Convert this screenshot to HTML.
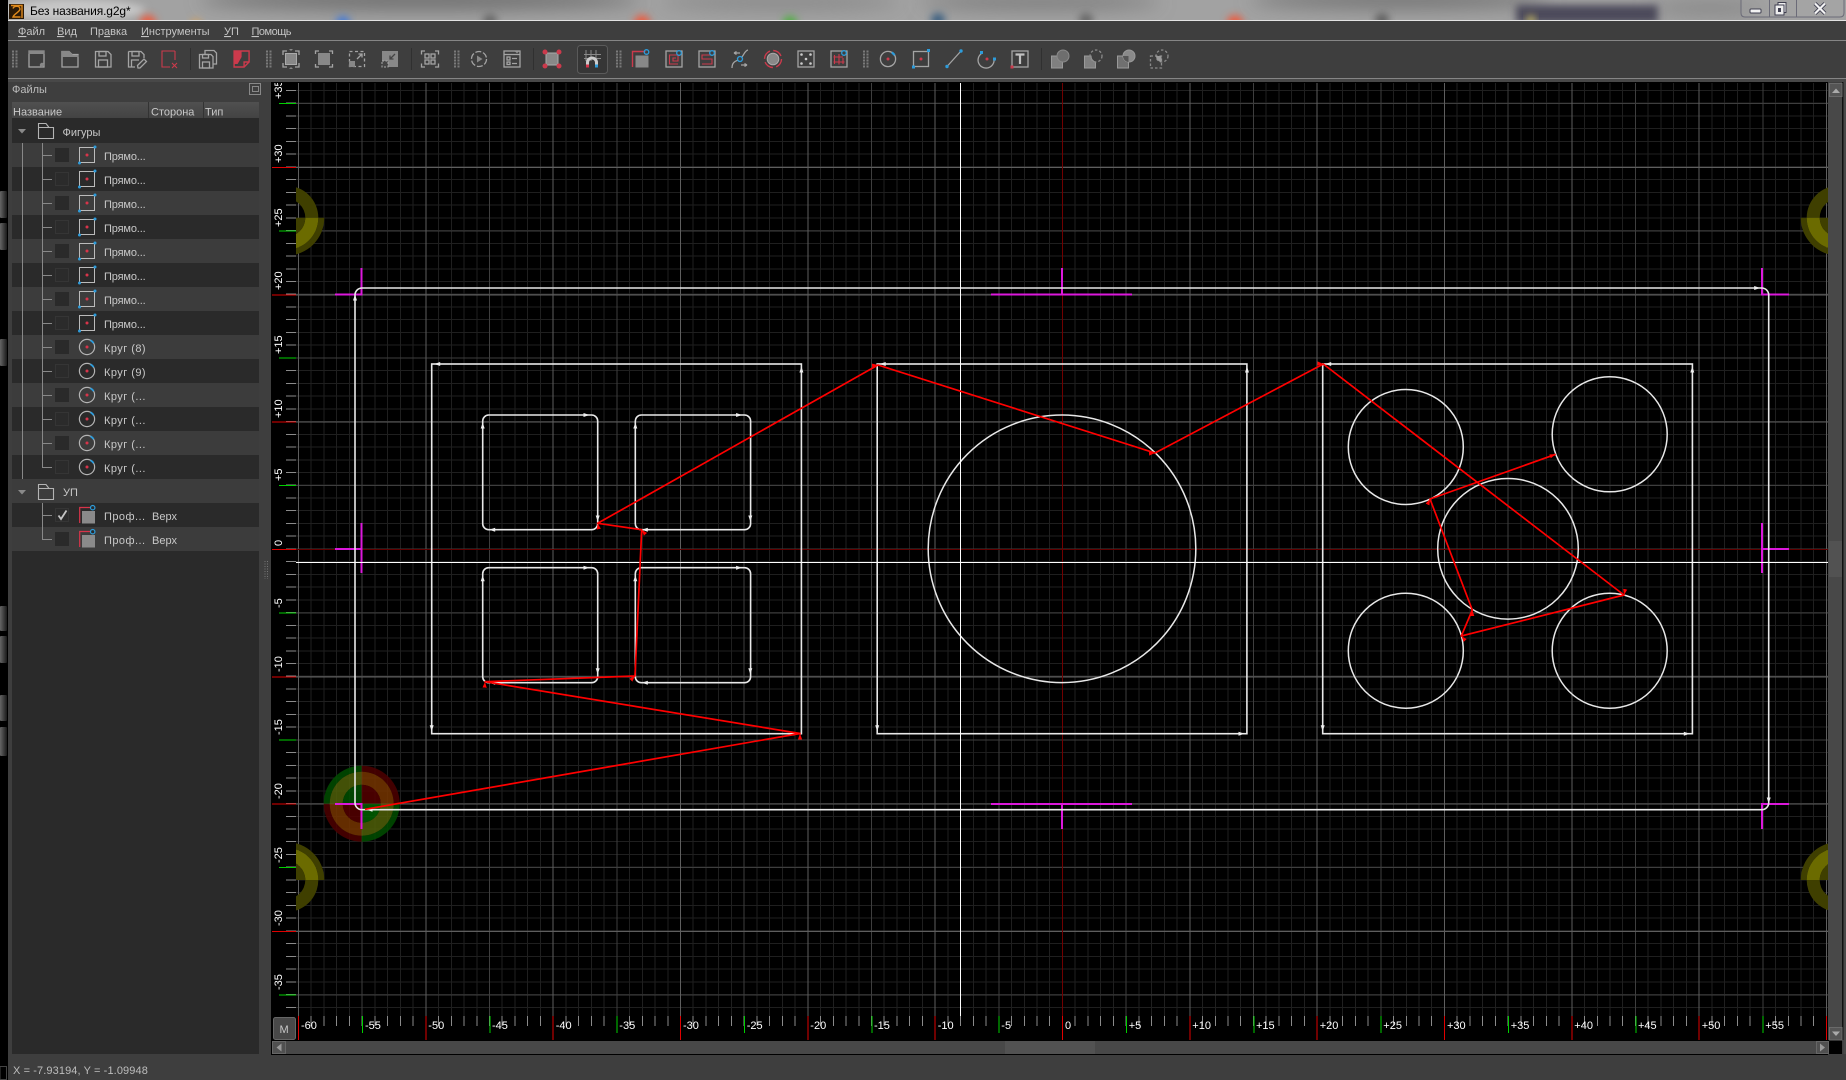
<!DOCTYPE html>
<html><head><meta charset="utf-8"><title>Без названия.g2g*</title>
<style>
html,body{margin:0;padding:0;background:#3e3e3e;overflow:hidden}
svg{display:block}
text{font-family:"Liberation Sans","Noto Sans CJK SC",sans-serif;font-size:11px}
.s{fill:none;stroke:#a4a4a4;stroke-width:1.3}
.d{fill:none;stroke:#8a8a8a;stroke-width:1.3}
.r{fill:none;stroke:#cc3a4c;stroke-width:1.4}
.f{fill:#888}
.rf{fill:#cc3a4c}
.b{fill:#2d9cdb}
.bs{fill:none;stroke:#2d9cdb;stroke-width:1.3}
.t{fill:#c8c8c8}
.k{fill:#c8c8c8;letter-spacing:.45px}
.m{fill:#c4c4c4}
.w{fill:none;stroke:#e8e8e8;stroke-width:1.6}
.g{shape-rendering:crispEdges;fill:none}
.mg{stroke:#dc18dc;stroke-width:1.6;fill:none;shape-rendering:crispEdges}
.l{fill:#fff}
.tree{stroke:#888;stroke-width:1;fill:none;shape-rendering:crispEdges}
</style></head><body>
<svg width="1846" height="1080" viewBox="0 0 1846 1080" xmlns="http://www.w3.org/2000/svg">
<defs>
<filter id="bl" x="-50%" y="-200%" width="200%" height="500%"><feGaussianBlur stdDeviation="9"/></filter>
<filter id="bl2" x="-50%" y="-200%" width="200%" height="500%"><feGaussianBlur stdDeviation="4"/></filter>
<clipPath id="tc"><rect x="8" y="0" width="1838" height="20"/></clipPath>
<clipPath id="cv"><rect x="296" y="83" width="1532" height="933"/></clipPath>
<clipPath id="yc"><rect x="272" y="83" width="24" height="933"/></clipPath>
<linearGradient id="hd" x1="0" y1="0" x2="0" y2="1"><stop offset="0" stop-color="#505050"/><stop offset="1" stop-color="#434343"/></linearGradient>
<linearGradient id="sb" x1="0" y1="0" x2="1" y2="0"><stop offset="0" stop-color="#666"/><stop offset="1" stop-color="#1a1a1a"/></linearGradient>
<marker id="ra" markerUnits="userSpaceOnUse" markerWidth="7" markerHeight="5" refX="6" refY="2.500" orient="auto"><path d="M0 .4L6 2.500L0 4.600z" fill="#f00"/></marker>
<path id="au" d="M0 -3.500L2 2.500H-2Z" fill="#eee"/>
<path id="qo" d="M-38 0A38 38 0 0 1 0 -38V-32A32 32 0 0 0 -32 0Z"/>
<path id="qm" d="M-32 0A32 32 0 0 1 0 -32V-19A19 19 0 0 0 -19 0Z"/>
<path id="qi" d="M-19 0A19 19 0 0 1 0 -19V0Z"/>
<g id="ye">
 <use href="#qm" transform="scale(-1,1)" fill="#3f3f00"/>
 <use href="#qm" fill="#3f3f00"/>
 <use href="#qo" transform="scale(-1,-1)" fill="#3f3f00"/>
 <use href="#qm" transform="scale(-1,-1)" fill="#6b6b00"/>
 <use href="#qi" transform="scale(-1,-1)" fill="#3f3f00"/>
 <use href="#qo" transform="scale(1,-1)" fill="#3f3f00"/>
 <use href="#qm" transform="scale(1,-1)" fill="#6b6b00"/>
 <use href="#qi" transform="scale(1,-1)" fill="#3f3f00"/>
</g>
<g id="irect"><rect x="79.500" y="-7.500" width="15" height="15" fill="none" stroke="#bbb"/><circle cx="87" cy="0" r="1.500" fill="#d8344a"/><circle cx="95" cy="-8" r="1.500" class="b"/><circle cx="79.500" cy="8" r="1.500" class="b"/></g>
<g id="icirc"><circle cx="87" cy="0" r="7.600" fill="none" stroke="#b4b4b4" stroke-width="1.200"/><circle cx="87" cy="0" r="1.500" fill="#d8344a"/><path d="M90.500 -6.700A7.600 7.600 0 0 1 93.600 -3.800" fill="none" stroke="#2d9cdb" stroke-width="1.800"/></g>
<g id="iprof"><path d="M79.700 8V-7.500H91" fill="none" stroke="#d8344a" stroke-width="1.200"/><rect x="82" y="-4" width="13" height="12.500" fill="#8a8a8a"/><circle cx="92.700" cy="-7.300" r="2.200" fill="#2a2a2a" stroke="#2d9cdb" stroke-width="1.200"/></g>
<path id="ifold" d="M38.500 20.500V5.500H46L49 9.500H53.500V20.500ZM38.500 9.500H49" fill="none" stroke="#b4b4b4" stroke-width="1.100"/>
<g id="cl"><rect x="55" y="-7" width="14" height="14" fill="#2a2a2a"/></g>
<g id="cd"><rect x="55.500" y="-6.500" width="13" height="13" fill="#2b2b2b" stroke="#353535"/></g>
<g id="grip"><path d="M-2 -8.500V9M1.500 -8.500V9" stroke="#7a7a7a" stroke-width="2" stroke-dasharray="2 1" fill="none"/></g>
</defs>

<!-- base -->
<rect width="1846" height="1080" fill="#3e3e3e"/>

<!-- blurred title bar -->
<g clip-path="url(#tc)">
 <rect x="8" y="0" width="1838" height="20" fill="#a2a2a2"/>
 <ellipse cx="420" cy="0" rx="220" ry="9" fill="#6a6a6a" filter="url(#bl)"/>
 <ellipse cx="780" cy="2" rx="120" ry="7" fill="#858585" filter="url(#bl)"/>
 <ellipse cx="1040" cy="2" rx="120" ry="7" fill="#787878" filter="url(#bl)"/>
 <ellipse cx="1400" cy="0" rx="150" ry="8" fill="#707070" filter="url(#bl)"/>
 <ellipse cx="1710" cy="8" rx="60" ry="8" fill="#888" filter="url(#bl)"/>
 <ellipse cx="70" cy="10" rx="75" ry="11" fill="#c6c6c6" filter="url(#bl2)"/>
 <circle cx="148" cy="23" r="8" fill="#ee5a3c" filter="url(#bl2)"/>
 <circle cx="196" cy="24" r="5" fill="#d9a25a" filter="url(#bl2)"/>
 <circle cx="343" cy="23" r="7" fill="#3f78d8" filter="url(#bl2)"/>
 <circle cx="490" cy="21" r="7" fill="#666" filter="url(#bl2)"/>
 <circle cx="642" cy="23" r="8" fill="#ee5a3c" filter="url(#bl2)"/>
 <circle cx="790" cy="23" r="7" fill="#4caf3c" filter="url(#bl2)"/>
 <circle cx="938" cy="20" r="7" fill="#3b5f80" filter="url(#bl2)"/>
 <circle cx="1086" cy="20" r="7" fill="#666" filter="url(#bl2)"/>
 <circle cx="1235" cy="23" r="8" fill="#ee5a3c" filter="url(#bl2)"/>
 <circle cx="1382" cy="20" r="7" fill="#5f5f5f" filter="url(#bl2)"/>
 <rect x="1516" y="5" width="142" height="18" fill="#4b4a5a" filter="url(#bl2)"/>
 <circle cx="1531" cy="20" r="4" fill="#e0d060" filter="url(#bl2)"/>
</g>
<rect x="0" y="0" width="8" height="1080" fill="#000"/>
<rect x="8" y="20" width="1838" height="1" fill="#e2e2e2"/>

<!-- app icon + title -->
<rect x="9" y="4" width="15" height="15" fill="#2a1a08"/>
<path d="M13 8.500C14 5.500 20 5.500 20 9C20 12 14 13.500 13 17H20.500M11 5.500H22V18" fill="none" stroke="#e08a1c" stroke-width="1.400"/>
<text x="30" y="15" fill="#000" style="font-size:12px;letter-spacing:-.12px">Без названия.g2g*</text>

<!-- window buttons -->
<path d="M1741 0V13Q1741 17 1745 17H1840Q1844 17 1844 13V0" fill="#a8a8a8" fill-opacity=".35" stroke="#6b6b78"/>
<path d="M1769.500 0V17M1796.500 0V17" stroke="#6b6b78"/>
<rect x="1750" y="9" width="11" height="4" rx="1" fill="#f2f2f2" stroke="#3f3f50"/>
<rect x="1778" y="2.500" width="8" height="10" fill="#eee" stroke="#3f3f50"/>
<rect x="1775" y="5" width="9" height="10" fill="#eee" stroke="#3f3f50"/>
<rect x="1778" y="8" width="3" height="4" fill="#3f3f50"/>
<path d="M1815 3.500L1825 13.500M1825 3.500L1815 13.500" stroke="#3f3f50" stroke-width="4"/>
<path d="M1815 3.500L1825 13.500M1825 3.500L1815 13.500" stroke="#f4f4f4" stroke-width="2.200"/>

<!-- menu -->
<g class="m">
<text x="18" y="35" class="m"><tspan text-decoration="underline">Ф</tspan>айл</text>
<text x="57" y="35" class="m"><tspan text-decoration="underline">В</tspan>ид</text>
<text x="90" y="35" class="m">Пр<tspan text-decoration="underline">а</tspan>вка</text>
<text x="141" y="35" class="m"><tspan text-decoration="underline">И</tspan>нструменты</text>
<text x="224" y="35" class="m"><tspan text-decoration="underline">У</tspan>П</text>
<text x="251.500" y="35" class="m" style="letter-spacing:-.5px"><tspan text-decoration="underline">П</tspan>омощь</text>
</g>
<rect x="8" y="40" width="1838" height="1" fill="#858585"/>
<rect x="8" y="78" width="1838" height="1" fill="#858585"/>
<rect x="8" y="79" width="1838" height="3" fill="#484848"/>

<!-- toolbar grips and separators -->
<use href="#grip" transform="translate(15,59)"/>
<use href="#grip" transform="translate(269,59)"/>
<use href="#grip" transform="translate(457,59)"/>
<use href="#grip" transform="translate(619,59)"/>
<use href="#grip" transform="translate(866,59)"/>
<path d="M190.500 48V70M411.500 48V70M533.500 48V70M1041.500 48V70" stroke="#303030"/>

<!-- toolbar icons -->
<g transform="translate(37,59)"><rect class="s" x="-8" y="-8" width="15" height="16"/><rect class="f" x="-8.500" y="-8.500" width="16" height="3.500"/><circle class="f" cx="5" cy="6" r="2.200"/></g>
<g transform="translate(70,59)"><path class="s" d="M-8 -7.500H-1L2 -4.500H8V8H-8Z"/><path class="f" d="M-8 -8H-1L3 -4H8.500V-2H-8Z"/></g>
<g transform="translate(103,59)"><path class="s" d="M-7.500 -7.500H5L8 -4.500V8H-7.500Z"/><rect class="s" x="-4" y="-7.500" width="7" height="4.500"/><rect class="s" x="-4.500" y="1" width="9" height="7"/></g>
<g transform="translate(136,59)"><path class="s" d="M-7.500 -7.500H5L8 -4.500V-1M-1 8H-7.500V-7.500"/><rect class="s" x="-4" y="-7.500" width="7" height="4.500"/><path class="s" d="M-4.500 8V1H3"/><path class="s" d="M2 9L1.500 6.500L8 0L10.500 2.500L4 9Z"/></g>
<g transform="translate(169,59)"><path class="r" d="M6 -8H-7V8H1M6 -8V1" stroke-width="1.100" style="stroke-width:1.100"/><path class="r" d="M3 4L8 9M8 4L3 9" style="stroke-width:1.100"/></g>
<g transform="translate(208,59)"><path class="s" d="M-8.500 -4.500H3L5 -2.500V9H-8.500Z"/><rect class="s" x="-5.500" y="-4.500" width="6" height="3.500"/><rect class="s" x="-5.500" y="3" width="7" height="6"/><path class="s" d="M-3 -4.500V-8.500H6L8.500 -6V5H5"/></g>
<g transform="translate(241.600,59)"><path class="r" d="M-7.500 -8H7.500V3L2.500 8H-7.500Z"/><path class="r" d="M2.500 8V3H7.500"/><path class="rf" d="M-7.500 -8H0V-2L-4 5H-7.500Z"/></g>

<g transform="translate(291,59)"><rect class="f" x="-5.500" y="-5.500" width="11" height="11" stroke="#aaa"/><path class="s" d="M-8 -4V-8H-4M4 -8H8V-4M8 4V8H4M-4 8H-8V4"/><path class="f" d="M-2 -10H2L0 -8ZM-2 10H2L0 8Z"/></g>
<g transform="translate(324,59)"><rect class="f" x="-6" y="-6" width="12" height="12"/><path class="s" d="M-8.500 -5V-8H-5M5 -8H8.500V-5M8.500 5V8H5M-5 8H-8.500V5"/></g>
<g transform="translate(357,59)"><rect class="s" x="-7.500" y="-7.500" width="15" height="15" stroke-dasharray="3 2.500"/><rect class="f" x="-8" y="2" width="6" height="6"/><path class="s" d="M0 0L5 -5M1.500 -5H5V-1.500"/></g>
<g transform="translate(390,59)"><rect class="f" x="-8" y="-8" width="16" height="16"/><rect x="-8" y="2" width="6" height="6" fill="#444" stroke="#aaa" stroke-dasharray="2 1.500"/><path d="M5 -5L0 0M0 -3.500V0H3.500" fill="none" stroke="#444" stroke-width="1.300"/></g>
<g transform="translate(430,59)"><rect class="s" x="-5" y="-5" width="4" height="4"/><rect class="s" x="1" y="-5" width="4" height="4"/><rect class="s" x="-5" y="1" width="4" height="4"/><rect class="s" x="1" y="1" width="4" height="4"/><path class="s" d="M-8.500 -4.500V-8H-5M5 -8H8.500V-4.500M8.500 4.500V8H5M-5 8H-8.500V4.500"/></g>
<g transform="translate(479,59)"><circle class="s" cx="0" cy="0" r="7.500" stroke-dasharray="6 1.850"/><path class="f" d="M-2 -3.500L3.500 0L-2 3.500Z"/></g>
<g transform="translate(512,59)"><rect class="s" x="-8" y="-8" width="16" height="16"/><path class="s" d="M-8 -4.500H8"/><path class="f" d="M3 -7.500H7L5 -5.500Z"/><rect class="s" x="-5" y="-2" width="3" height="3"/><rect class="s" x="-5" y="3" width="3" height="2.500"/><path class="s" d="M0 -.5H5M0 4.500H5"/></g>
<g transform="translate(552,59)"><rect class="f" x="-6" y="-6" width="12" height="12" stroke="#aaa"/><circle class="rf" cx="-7" cy="-7" r="2.500"/><circle class="rf" cx="7" cy="-7" r="2.500"/><circle class="rf" cx="-7" cy="7" r="2.500"/><circle class="rf" cx="7" cy="7" r="2.500"/></g>

<rect x="577.500" y="45.500" width="30" height="28" rx="3" fill="#363636" stroke="#5a5a5a"/>
<g transform="translate(592,59)"><path d="M-8 -4.500H9M-8 -.5H9M-6 -9V2M-1 -9V2M4 -9V2" stroke="#8a8a8a" fill="none"/><path d="M-6 8V3.500A5.500 5.500 0 0 1 6 3.500V8H3V3.500A2.500 2.500 0 0 0 -3 3.500V8Z" fill="#ccc"/><rect x="-6" y="5.500" width="3" height="3" fill="#d8344a"/><rect x="3" y="5.500" width="3" height="3" fill="#2d9cdb"/></g>

<g transform="translate(640.500,59)"><path class="r" d="M-8 8V-7.500H5"/><rect class="f" x="-5" y="-3.500" width="13" height="12"/><circle class="bs" cx="6" cy="-7" r="2.300"/></g>
<g transform="translate(674,59)"><rect class="s" x="-8" y="-8" width="16" height="16"/><path class="r" style="stroke-width:1.100" d="M2 -1H-1V2H4V-4H-4.500V5H4"/><circle class="bs" cx="5" cy="-6" r="2.300" style="fill:#3e3e3e"/></g>
<g transform="translate(707,59)"><rect class="s" x="-8" y="-8" width="16" height="16"/><path class="r" style="stroke-width:1.100" d="M4 -4H-5V0H5V5H-5"/><circle class="bs" cx="5" cy="-6" r="2.300" style="fill:#3e3e3e"/></g>
<g transform="translate(740,59)"><path class="s" d="M-8 9C-8 2 -3 2 0 0C4 -3 4 -8 8 -9"/><path class="s" d="M-6 -6H0M-6 -6L-3.500 -7.500M-6 -6L-3.500 -4.500M1 6H7M7 6L4.500 4.500M7 6L4.500 7.500"/><circle class="bs" cx="0" cy="0" r="2.500" style="fill:#3e3e3e"/></g>
<g transform="translate(773,59)"><circle class="f" cx="0" cy="0" r="5.800" stroke="#aaa"/><circle class="r" cx="0" cy="0" r="8.500" stroke-dasharray="10 3.350"/></g>
<g transform="translate(806,59)"><rect class="s" x="-8" y="-8" width="16" height="16"/><circle cx="-4.500" cy="-4.500" r="1.300" fill="#ccc"/><circle cx="4.500" cy="-4.500" r="1.300" fill="#ccc"/><circle cx="-4.500" cy="4.500" r="1.300" fill="#ccc"/><circle cx="4.500" cy="4.500" r="1.300" fill="#ccc"/><circle cx="0" cy="0" r="1.300" fill="#ccc"/></g>
<g transform="translate(839,59)"><rect class="s" x="-8" y="-8" width="16" height="16"/><path class="r" style="stroke-width:1.100" d="M-4.500 -4V5M0 -5V5.500M4 -1V5M-5.500 -2H4M-5.500 3H5.500"/><circle class="bs" cx="5" cy="-6" r="2.300" style="fill:#3e3e3e"/></g>
<g transform="translate(888,59)"><circle class="s" cx="0" cy="0" r="7.600"/><circle class="rf" cx="0" cy="0" r="1.500"/><path d="M3.800 -6.500A7.600 7.600 0 0 1 6.500 -3.800" stroke="#2d9cdb" stroke-width="2.200" fill="none"/></g>
<g transform="translate(921,59)"><rect class="s" x="-7.500" y="-7.500" width="15" height="15"/><circle class="rf" cx="0" cy="0" r="1.500"/><rect class="b" x="6" y="-10" width="3" height="3"/><rect class="b" x="-9" y="6.500" width="3" height="3"/></g>
<g transform="translate(954,59)"><path class="s" d="M-7 7.500L7 -8"/><circle class="b" cx="-7" cy="7.500" r="1.700"/><circle class="b" cx="7" cy="-8" r="1.700"/></g>
<g transform="translate(987,59)"><path class="s" d="M-5.500 -5.500A8 8 0 1 0 7 0"/><circle class="rf" cx="0" cy="0" r="1.500"/><rect class="b" x="-7" y="-8" width="3" height="3"/><rect class="b" x="6" y="-1.500" width="3" height="3"/></g>
<g transform="translate(1020,59)"><rect class="s" x="-8" y="-8" width="16" height="16"/><path d="M-4.500 -4.500H4.500M0 -4.500V5" stroke="#c0c0c0" stroke-width="2.200" fill="none"/><rect class="rf" x="-9.500" y="6.500" width="3" height="3"/></g>

<g transform="translate(1060,59)"><rect x="-8.500" y="-3" width="11" height="12" fill="#808080" stroke="#9a9a9a"/><circle cx="3" cy="-3" r="6" fill="#6e6e6e" stroke="#8a8a8a"/></g>
<g transform="translate(1093,59)"><path d="M-8.500 -3H-2A6 6 0 0 0 2.500 3V9H-8.500Z" fill="#808080" stroke="#9a9a9a"/><circle class="d" cx="3" cy="-3" r="6" stroke-dasharray="2.500 2"/></g>
<g transform="translate(1126,59)"><rect x="-8.500" y="-3" width="11" height="12" fill="#707070" stroke="#9a9a9a"/><circle cx="3" cy="-3" r="6" fill="#8a8a8a" stroke="#9a9a9a"/><path d="M-3 -3H2.500V3A6 6 0 0 1 -3 -3Z" fill="#555"/></g>
<g transform="translate(1159,59)"><rect class="d" x="-8.500" y="-3" width="11" height="12" stroke-dasharray="2.500 2"/><circle class="d" cx="3" cy="-3" r="6" stroke-dasharray="2.500 2"/><path d="M-3 -3H2.500V3A6 6 0 0 1 -3 -3Z" fill="#9a9a9a"/></g>

<!-- left strip buttons -->
<g fill="url(#sb)">
<rect x="0" y="191" width="7" height="27" rx="1"/>
<rect x="0" y="223" width="7" height="27" rx="1"/>
<rect x="0" y="339" width="7" height="27" rx="1"/>
<rect x="0" y="606" width="7" height="25" rx="1"/>
<rect x="0" y="636" width="7" height="27" rx="1"/>
<rect x="0" y="695" width="7" height="26" rx="1"/>
<rect x="0" y="727" width="7" height="29" rx="1"/>
</g>

<!-- side panel -->
<text x="12" y="93" fill="#bcbcbc">Файлы</text>
<g fill="none" stroke="#888"><rect x="249.500" y="83.500" width="11" height="11"/><rect x="252.500" y="86.500" width="6" height="5"/></g>
<rect x="12" y="102" width="247" height="952" fill="#2a2a2a"/>
<rect x="12" y="102" width="247" height="16" fill="url(#hd)"/>
<path d="M148.500 102V118M203.500 102V118" stroke="#333" shape-rendering="crispEdges"/>
<text x="13" y="115.500" class="t">Название</text>
<text x="151" y="115.500" class="t">Сторона</text>
<text x="205" y="115.500" class="t">Тип</text>

<g fill="#3c3c3c">
<rect x="12" y="143" width="247" height="24"/><rect x="12" y="191" width="247" height="24"/><rect x="12" y="239" width="247" height="24"/><rect x="12" y="287" width="247" height="24"/><rect x="12" y="335" width="247" height="24"/><rect x="12" y="383" width="247" height="24"/><rect x="12" y="431" width="247" height="24"/><rect x="12" y="479" width="247" height="24"/><rect x="12" y="527" width="247" height="24"/>
</g>

<path class="tree" d="M22.500 143V479M42.500 143V467.500H52M42.500 155.500H52M42.500 179.500H52M42.500 203.500H52M42.500 227.500H52M42.500 251.500H52M42.500 275.500H52M42.500 299.500H52M42.500 323.500H52M42.500 347.500H52M42.500 371.500H52M42.500 395.500H52M42.500 419.500H52M42.500 443.500H52M42.500 503V539.500H52M42.500 515.500H52"/>

<path d="M18 129H26L22 133.500Z" fill="#8a8a8a"/><path d="M18 490H26L22 494.500Z" fill="#8a8a8a"/>
<use href="#ifold" transform="translate(0,118)"/><use href="#ifold" transform="translate(0,479)"/>
<text x="62.500" y="136" class="t">Фигуры</text>
<text x="63" y="496" class="t">УП</text>

<use href="#cl" y="155"/><use href="#cd" y="179"/><use href="#cl" y="203"/><use href="#cd" y="227"/><use href="#cl" y="251"/><use href="#cd" y="275"/><use href="#cl" y="299"/><use href="#cd" y="323"/><use href="#cl" y="347"/><use href="#cd" y="371"/><use href="#cl" y="395"/><use href="#cd" y="419"/><use href="#cl" y="443"/><use href="#cd" y="467"/><use href="#cd" y="515"/><use href="#cl" y="539"/>
<path d="M58.500 515.500L61 519L66.500 510.500" fill="none" stroke="#c4c4c4" stroke-width="1.800"/>

<use href="#irect" y="155"/><use href="#irect" y="179"/><use href="#irect" y="203"/><use href="#irect" y="227"/><use href="#irect" y="251"/><use href="#irect" y="275"/><use href="#irect" y="299"/><use href="#irect" y="323"/>
<use href="#icirc" y="347"/><use href="#icirc" y="371"/><use href="#icirc" y="395"/><use href="#icirc" y="419"/><use href="#icirc" y="443"/><use href="#icirc" y="467"/>
<use href="#iprof" y="515"/><use href="#iprof" y="539"/>

<text x="104" y="160" class="t" style="letter-spacing:-.15px">Прямо...</text>
<text x="104" y="184" class="t" style="letter-spacing:-.15px">Прямо...</text>
<text x="104" y="208" class="t" style="letter-spacing:-.15px">Прямо...</text>
<text x="104" y="232" class="t" style="letter-spacing:-.15px">Прямо...</text>
<text x="104" y="256" class="t" style="letter-spacing:-.15px">Прямо...</text>
<text x="104" y="280" class="t" style="letter-spacing:-.15px">Прямо...</text>
<text x="104" y="304" class="t" style="letter-spacing:-.15px">Прямо...</text>
<text x="104" y="328" class="t" style="letter-spacing:-.15px">Прямо...</text>
<text x="104" y="352" class="k">Круг (8)</text>
<text x="104" y="376" class="k">Круг (9)</text>
<text x="104" y="400" class="k">Круг (...</text>
<text x="104" y="424" class="k">Круг (...</text>
<text x="104" y="448" class="k">Круг (...</text>
<text x="104" y="472" class="k">Круг (...</text>
<text x="104" y="520" class="k">Проф...</text><text x="152" y="520" class="t">Верх</text>
<text x="104" y="544" class="k">Проф...</text><text x="152" y="544" class="t">Верх</text>

<!-- splitter grip -->
<path d="M265 561V579M267.500 561V579" stroke="#777" stroke-dasharray="1 1.500" fill="none"/>

<!-- canvas -->
<rect x="271" y="82" width="1557" height="972" fill="#000"/>

<!-- grid -->
<g class="g">
 <line x1="298" y1="549.500" x2="1828" y2="549.500" stroke="#1f1f1f" stroke-width="933" stroke-dasharray="1 11.733"/>
 <line x1="1062" y1="90" x2="1062" y2="1016" stroke="#1f1f1f" stroke-width="1532" stroke-dasharray="1 11.733"/>
 <line x1="298" y1="549.500" x2="1828" y2="549.500" stroke="#3e3e3e" stroke-width="933" stroke-dasharray="1 62.667"/>
 <line x1="1062" y1="103" x2="1062" y2="1016" stroke="#3e3e3e" stroke-width="1532" stroke-dasharray="1 62.667"/>
 <line x1="298" y1="549.500" x2="1828" y2="549.500" stroke="#5e5e5e" stroke-width="933" stroke-dasharray="1 126.330"/>
 <line x1="1062" y1="167" x2="1062" y2="1016" stroke="#5e5e5e" stroke-width="1532" stroke-dasharray="1 126.330"/>
 <rect x="1062" y="83" width="1" height="933" fill="#700000"/>
 <rect x="296" y="549" width="1532" height="1" fill="#600000"/>
</g>

<g clip-path="url(#cv)">
 <!-- yellow markers -->
 <use href="#ye" transform="translate(286.300,217.700)"/>
 <use href="#ye" transform="translate(286.300,880) scale(1,-1)"/>
 <use href="#ye" transform="translate(1838.700,217.700)"/>
 <use href="#ye" transform="translate(1838.700,880) scale(1,-1)"/>

 <!-- start target -->
 <g transform="translate(361.700,803.700)" fill-opacity=".85">
  <use href="#qo" fill="#004d00"/><use href="#qm" fill="#4f5f08"/><use href="#qi" fill="#005000"/>
  <use href="#qo" transform="scale(-1,1)" fill="#4d0000"/><use href="#qm" transform="scale(-1,1)" fill="#753500"/><use href="#qi" transform="scale(-1,1)" fill="#550000"/>
  <use href="#qo" transform="scale(1,-1)" fill="#4d0000"/><use href="#qm" transform="scale(1,-1)" fill="#753500"/><use href="#qi" transform="scale(1,-1)" fill="#550000"/>
  <use href="#qo" transform="scale(-1,-1)" fill="#004d00"/><use href="#qm" transform="scale(-1,-1)" fill="#4f5f08"/><use href="#qi" transform="scale(-1,-1)" fill="#006000"/>
 </g>

 <!-- magenta marks -->
 <path class="mg" d="M361.500 268V294.500H335M1762 268V294.500H1789M361.500 829V804H335M1762 829V804H1789M1062 268V294.500M991 294.500H1132M1062 829V804M991 804H1132M361.500 523V573M361.500 549H335M1762 523V573M1762 549H1789"/>

 <!-- geometry -->
 <rect class="w" x="355" y="288" width="1413.700" height="521.700" rx="7"/>
 <rect class="w" x="431.700" y="364" width="369.700" height="369.700"/>
 <rect class="w" x="877.200" y="364" width="369.700" height="369.700"/>
 <rect class="w" x="1322.700" y="364" width="369.700" height="369.700"/>
 <rect class="w" x="482.700" y="415" width="115" height="114.700" rx="6"/>
 <rect class="w" x="635.300" y="415" width="115.300" height="114.700" rx="6"/>
 <rect class="w" x="482.700" y="567.700" width="115" height="115" rx="6"/>
 <rect class="w" x="635.300" y="567.700" width="115.300" height="115" rx="6"/>
 <circle class="w" cx="1062" cy="548.800" r="133.800" style="stroke-width:1.500"/>
 <circle class="w" cx="1405.800" cy="447" r="57.500" style="stroke-width:1.500"/>
 <circle class="w" cx="1609.700" cy="434.300" r="57.500" style="stroke-width:1.500"/>
 <circle class="w" cx="1508" cy="548.800" r="70.300" style="stroke-width:1.500"/>
 <circle class="w" cx="1405.800" cy="650.700" r="57.500" style="stroke-width:1.500"/>
 <circle class="w" cx="1609.700" cy="650.700" r="57.500" style="stroke-width:1.500"/>

 <!-- arrows -->
 <use href="#au" transform="translate(586,415) rotate(90)"/><use href="#au" transform="translate(482.700,426)"/><use href="#au" transform="translate(492.700,529.700) rotate(-90)"/><use href="#au" transform="translate(597.700,518) rotate(180)"/>
 <use href="#au" transform="translate(738.600,415) rotate(90)"/><use href="#au" transform="translate(635.300,426)"/><use href="#au" transform="translate(645.300,529.700) rotate(-90)"/><use href="#au" transform="translate(750.300,518) rotate(180)"/>
 <use href="#au" transform="translate(586,567.700) rotate(90)"/><use href="#au" transform="translate(482.700,578.700)"/><use href="#au" transform="translate(492.700,682.700) rotate(-90)"/><use href="#au" transform="translate(597.700,670.700) rotate(180)"/>
 <use href="#au" transform="translate(738.600,567.700) rotate(90)"/><use href="#au" transform="translate(635.300,578.700)"/><use href="#au" transform="translate(645.300,682.700) rotate(-90)"/><use href="#au" transform="translate(750.300,670.700) rotate(180)"/>
 <use href="#au" transform="translate(437.700,364) rotate(-90)"/><use href="#au" transform="translate(431.700,727.700) rotate(180)"/><use href="#au" transform="translate(795.400,733.700) rotate(90)"/><use href="#au" transform="translate(801.400,370)"/>
 <use href="#au" transform="translate(883.200,364) rotate(-90)"/><use href="#au" transform="translate(877.200,727.700) rotate(180)"/><use href="#au" transform="translate(1241,733.700) rotate(90)"/><use href="#au" transform="translate(1247,370)"/>
 <use href="#au" transform="translate(1328.700,364) rotate(-90)"/><use href="#au" transform="translate(1322.700,727.700) rotate(180)"/><use href="#au" transform="translate(1686.300,733.700) rotate(90)"/><use href="#au" transform="translate(1692.300,370)"/>
 <use href="#au" transform="translate(355,298)"/><use href="#au" transform="translate(1756.700,288) rotate(90)"/><use href="#au" transform="translate(1768.700,800) rotate(180)"/><use href="#au" transform="translate(370,809.700) rotate(-90)"/>

 <!-- crosshair -->
 <rect x="960" y="83" width="1" height="933" fill="#fff"/>
 <rect x="296" y="562" width="1532" height="1" fill="#fff"/>

 <!-- rapid moves -->
 <polyline points="365,809.300 800,733.500 485,681.700 635,676 641.700,529.700 597.700,523.300 878,365 1155,453 1323.300,364 1624,595 1461.300,636 1472.300,610 1430,499 1555.700,454.300" fill="none" stroke="#f00" stroke-width="1.700" stroke-linejoin="round" marker-mid="url(#ra)" marker-end="url(#ra)"/>
</g>

<!-- vertical ruler -->
<g class="g">
 <line x1="291" y1="90" x2="291" y2="1016" stroke="#8a8a8a" stroke-width="10" stroke-dasharray="1 11.733"/>
 <line x1="287.500" y1="103" x2="287.500" y2="1016" stroke="#00d000" stroke-width="17" stroke-dasharray="1 126.330"/>
 <line x1="284" y1="167" x2="284" y2="1016" stroke="#e00000" stroke-width="24" stroke-dasharray="1 126.330"/>
</g>
<g clip-path="url(#yc)">
<text class="l" transform="translate(282,99) rotate(-90)">+35</text>
<text class="l" transform="translate(282,163) rotate(-90)">+30</text>
<text class="l" transform="translate(282,227) rotate(-90)">+25</text>
<text class="l" transform="translate(282,290) rotate(-90)">+20</text>
<text class="l" transform="translate(282,354) rotate(-90)">+15</text>
<text class="l" transform="translate(282,418) rotate(-90)">+10</text>
<text class="l" transform="translate(282,481) rotate(-90)">+5</text>
<text class="l" transform="translate(282,546) rotate(-90)">0</text>
<text class="l" transform="translate(282,608) rotate(-90)">-5</text>
<text class="l" transform="translate(282,672) rotate(-90)">-10</text>
<text class="l" transform="translate(282,735) rotate(-90)">-15</text>
<text class="l" transform="translate(282,799) rotate(-90)">-20</text>
<text class="l" transform="translate(282,863) rotate(-90)">-25</text>
<text class="l" transform="translate(282,926) rotate(-90)">-30</text>
<text class="l" transform="translate(282,990) rotate(-90)">-35</text>
</g>

<!-- horizontal ruler -->
<rect x="272" y="1016" width="1556" height="24" fill="#000"/>
<g class="g">
 <line x1="298" y1="1021" x2="1828" y2="1021" stroke="#8a8a8a" stroke-width="10" stroke-dasharray="1 11.733"/>
 <line x1="362" y1="1024.500" x2="1828" y2="1024.500" stroke="#00d000" stroke-width="17" stroke-dasharray="1 126.330"/>
 <line x1="298" y1="1028" x2="1828" y2="1028" stroke="#e00000" stroke-width="24" stroke-dasharray="1 126.330"/>
</g>
<g>
<text class="l" x="301" y="1029">-60</text><text class="l" x="365" y="1029">-55</text><text class="l" x="428.300" y="1029">-50</text><text class="l" x="492" y="1029">-45</text><text class="l" x="555.700" y="1029">-40</text><text class="l" x="619.300" y="1029">-35</text><text class="l" x="683" y="1029">-30</text><text class="l" x="746.700" y="1029">-25</text><text class="l" x="810.300" y="1029">-20</text><text class="l" x="874" y="1029">-15</text><text class="l" x="937.700" y="1029">-10</text><text class="l" x="1001.300" y="1029">-5</text><text class="l" x="1065" y="1029">0</text><text class="l" x="1128.700" y="1029">+5</text><text class="l" x="1192.300" y="1029">+10</text><text class="l" x="1256" y="1029">+15</text><text class="l" x="1319.700" y="1029">+20</text><text class="l" x="1383.300" y="1029">+25</text><text class="l" x="1447" y="1029">+30</text><text class="l" x="1510.700" y="1029">+35</text><text class="l" x="1574.300" y="1029">+40</text><text class="l" x="1638" y="1029">+45</text><text class="l" x="1701.700" y="1029">+50</text><text class="l" x="1765.300" y="1029">+55</text>
</g>

<!-- M button -->
<rect x="273.500" y="1017.500" width="22" height="22" rx="2" fill="#484848" stroke="#666"/>
<text x="279.500" y="1033" fill="#c8c8c8">M</text>

<!-- horizontal scrollbar -->
<rect x="272" y="1040" width="1570" height="14" fill="#000"/>
<rect x="285" y="1041" width="1531" height="13" fill="#484848"/>
<rect x="1005" y="1041" width="90" height="13" fill="#525252"/>
<rect x="272.500" y="1041.500" width="13" height="12" fill="#505050" stroke="#666"/>
<path d="M281.500 1043.500V1051.500L276.500 1047.500Z" fill="#999"/>
<rect x="1816.500" y="1041.500" width="12" height="12" fill="#505050" stroke="#666"/>
<path d="M1820 1043.500V1051.500L1825 1047.500Z" fill="#999"/>
<rect x="271" y="1054" width="1557" height="1" fill="#000"/>

<!-- vertical scrollbar -->
<rect x="1828" y="83" width="14" height="957" fill="#484848"/>
<rect x="1842" y="82" width="1.500" height="958" fill="#111"/>
<rect x="1829.500" y="83.500" width="12.500" height="13" fill="#555" stroke="#6a6a6a"/>
<path d="M1832 93L1836 88.500L1840 93Z" fill="#aaa"/>
<rect x="1829" y="541" width="13" height="36" fill="#525252"/>
<rect x="1829.500" y="1027.500" width="12.500" height="12.500" fill="#555" stroke="#6a6a6a"/>
<path d="M1832 1031.500L1836 1036L1840 1031.500Z" fill="#aaa"/>
<rect x="1843.500" y="82" width="2.500" height="972" fill="#4a4a4a"/>

<!-- status bar -->
<rect x="8" y="1055" width="1838" height="25" fill="#3e3e3e"/>
<rect x="0" y="1066.500" width="6.500" height="13" fill="none" stroke="#444"/>
<text x="13" y="1074" fill="#bdbdbd" style="letter-spacing:.1px">X = -7.93194, Y = -1.09948</text>
</svg>
</body></html>
